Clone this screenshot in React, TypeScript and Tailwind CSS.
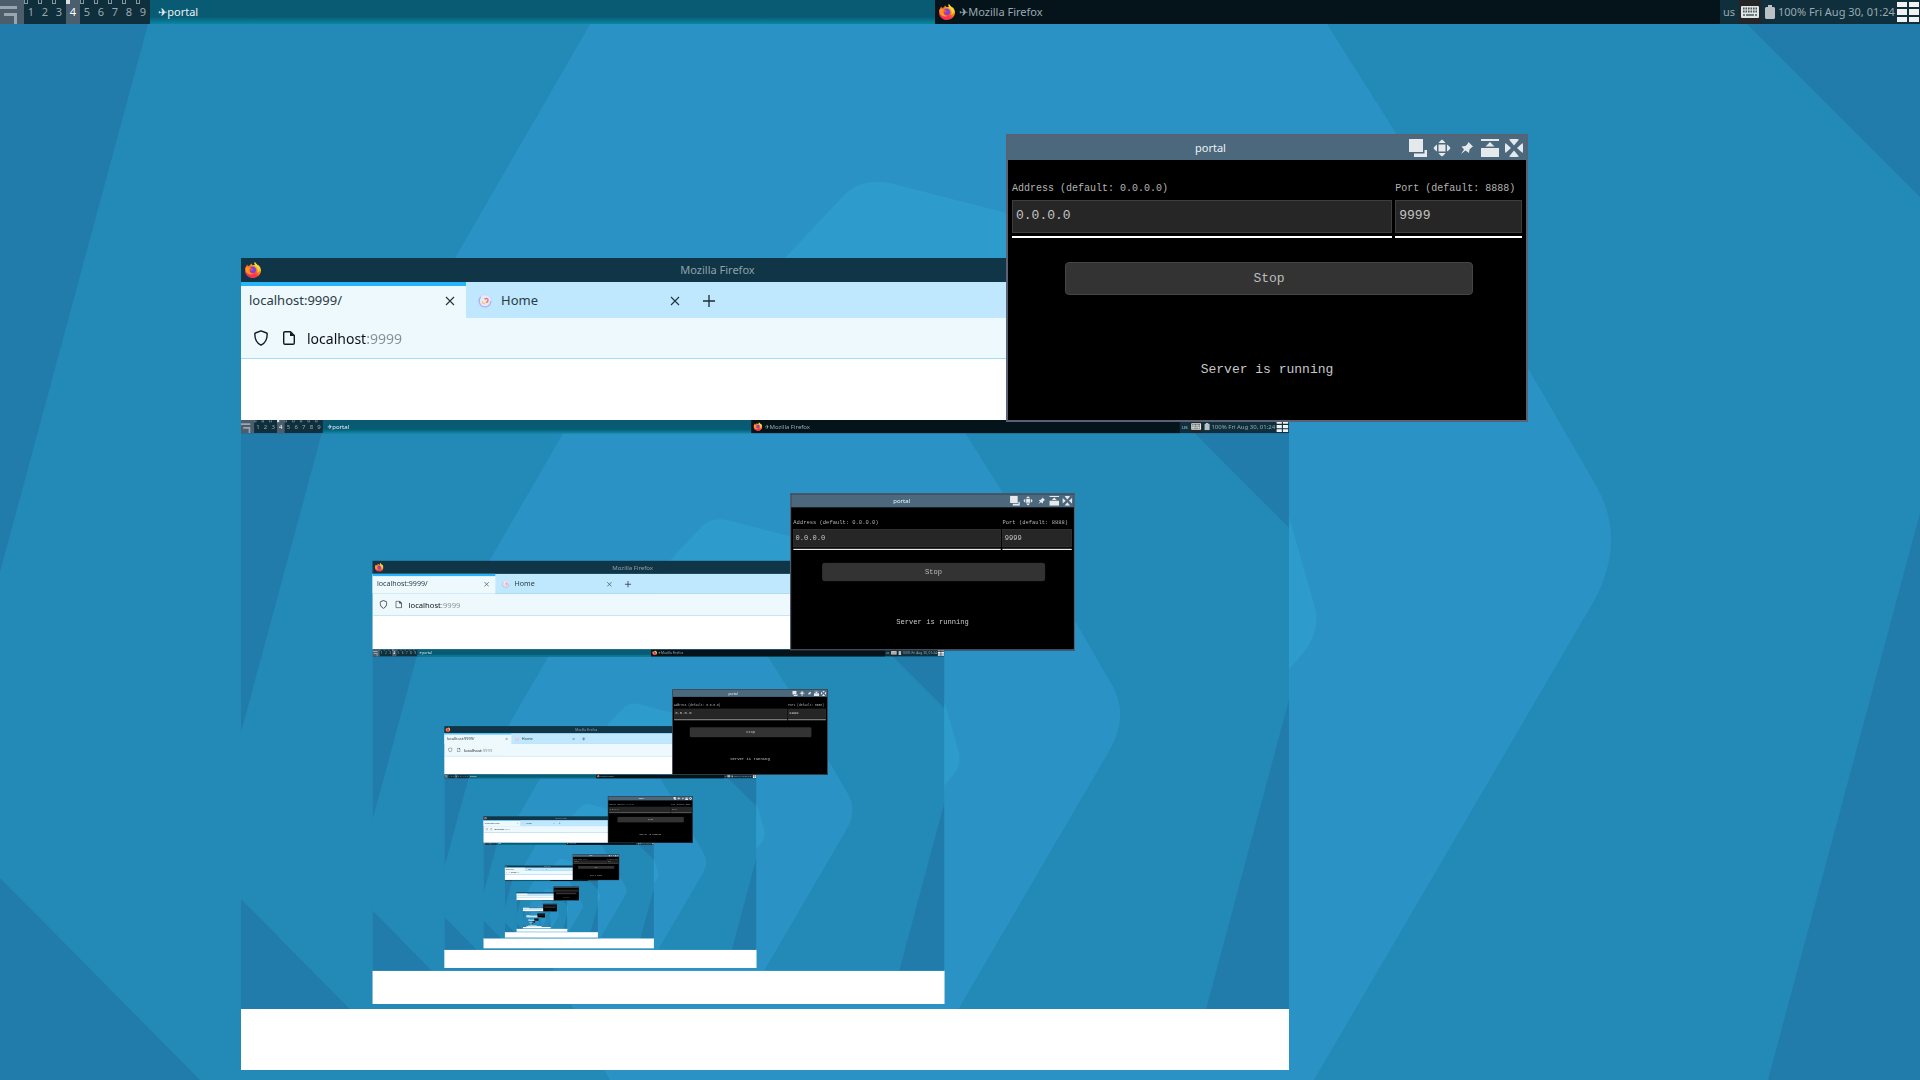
import { useId } from "react";

const DETAILED_DEPTH = 4;
const MAX_DEPTH = 10;
const WORKSPACES = [1, 2, 3, 4, 5, 6, 7, 8, 9];

function Wallpaper() {
  return (
    <svg
      className="absolute inset-0 h-full w-full"
      viewBox="0 0 1920 1080"
      preserveAspectRatio="xMidYMid slice"
      aria-hidden="true"
    >
      <rect width="1920" height="1080" fill="#2389b6" />
      <path d="M0 0H154L148 24L0 572Z" fill="#217cab" />
      <path d="M0 878L200 1080H0Z" fill="#217cab" />
      <path d="M1706 0H1920V197L1747 24Z" fill="#217cab" />
      <path d="M1920 513V1080H1768Z" fill="#217cab" />
      <path
        d="M604 0L440 284V800L610 1080H1314L1590 608Q1630 541 1594 482L1528 368L1394 130L1327 24L1304 0Z"
        fill="#2a92c4"
      />
      <path
        d="M785 258L845 194Q862 178 890 183L1007 213L1220 300L1290 520L1314 604Q1322 630 1304 652L1280 680L640 640Z"
        fill="#2d9bcb"
      />
    </svg>
  );
}

function FirefoxLogo() {
  const id = useId();
  return (
    <svg className="size-4 shrink-0" viewBox="0 0 16 16" aria-hidden="true">
      <defs>
        <linearGradient id={`${id}a`} x1="0.85" y1="0.1" x2="0.2" y2="0.9">
          <stop offset="0" stopColor="#fff44f" />
          <stop offset="0.35" stopColor="#ff980e" />
          <stop offset="0.65" stopColor="#ff3647" />
          <stop offset="1" stopColor="#f0305f" />
        </linearGradient>
      </defs>
      <path
        d="M2.2 2.6C2.4 3.4 2.8 3.9 3.4 4.1C4.2 3.4 4.8 3.3 5.4 3.4C5.3 2.5 5.7 1.8 6.2 1.5C6.4 2.3 7 2.9 8 3.2C8.6 3 9.4 2.9 10 3.1C9.2 2.2 9.3 1 9.9 0C10.6 1.6 12.4 2.4 13 4C13.3 3.7 13.3 3.3 13.2 2.9C14.9 4.2 16 6.2 16 8.3C16 12.7 12.4 16 8 16S0 12.7 0 8.4C0 6 1 4 2.2 2.6Z"
        fill={`url(#${id}a)`}
      />
      <path d="M0.300 6.500C1 4 3.500 4.500 5 6.200C4.200 7 4.300 8 4.500 8.800C5 11 7 12 9 11.600C7 13.500 3 12.500 1 10Z" fill="#ff9a1f" />
      <path
        d="M5.400 5.800C6.200 4.600 8 4.300 9.400 4.900C11.200 5.700 11.700 7.800 10.900 9.400C10 11 8 11.300 6.600 10.600C5.600 10.100 5 9.300 5 8.400C5.600 8.900 6.200 8.700 6.700 8.300L7.900 7.600C7.500 6.800 6.300 6.700 5.400 5.800Z"
        fill="#7b45e0"
      />
      <path
        d="M9.900 0C9 2.300 10.800 3.600 12 5.200C13.300 7 13.100 9.400 12 10.900C14.200 10 15 7.500 14.300 5.400C13.400 3 10.900 2.200 9.900 0Z"
        fill="#ffd83a"
      />
    </svg>
  );
}

function MenuIcon() {
  return (
    <svg className="size-6" viewBox="0 0 24 24" aria-hidden="true">
      <path d="M0 6h17v3H0zM4 13h13v3H4zM14 13h3v11h-3z" fill="#9aa6af" />
    </svg>
  );
}

function KeyboardIcon() {
  return (
    <svg className="h-6 w-[22px]" viewBox="0 0 22 24" aria-hidden="true">
      <rect width="22" height="24" fill="#252525" />
      <rect x="2" y="6" width="18" height="12" rx="1" fill="#dfe6e8" />
      <path d="M4 8.500h14M4 11.500h14" stroke="#4c5557" strokeWidth="2" strokeDasharray="1.600 0.900" />
      <path d="M4 15h2M7 15h8M16 15h2" stroke="#4c5557" strokeWidth="1.600" />
    </svg>
  );
}

function BatteryIcon() {
  return (
    <svg className="h-[14px] w-[10px]" viewBox="0 0 10 14" aria-hidden="true">
      <path d="M3 0h4v2h2l1 1v10l-1 1H1l-1-1V3l1-1h2z" fill="#b9bfc2" />
    </svg>
  );
}

function TilesIcon() {
  return (
    <svg className="h-6 w-[22px]" viewBox="0 0 22 24" aria-hidden="true">
      <path
        d="M0 2h10v5H0zM12 2h10v5H12zM0 9h10v6H0zM12 9h10v6H12zM0 17h10v5H0zM12 17h10v5H12z"
        fill="#f0f2f3"
      />
    </svg>
  );
}

function CloseGlyph() {
  return (
    <svg className="size-[10px]" viewBox="0 0 10 10" aria-hidden="true">
      <path d="M1 1l8 8M9 1l-8 8" stroke="#23343c" strokeWidth="1.100" />
    </svg>
  );
}

function Taskbar() {
  return (
    <header className="relative flex h-6 w-full shrink-0 bg-[#0f2f3d] text-[11px] leading-6 text-[#9aa9b0]">
      <button type="button" aria-label="Menu" className="w-6 shrink-0 bg-[#4c5d6c]">
        <MenuIcon />
      </button>
      <nav aria-label="Workspaces" className="flex w-[126px] shrink-0">
        {WORKSPACES.map((n) => (
          <button
            key={n}
            type="button"
            className={
              n === 4
                ? "relative h-6 w-[14px] bg-[#4b5e6d] text-white"
                : "relative h-6 w-[14px]"
            }
          >
            <span
              className={
                n === 4
                  ? "absolute left-0 top-0 h-1 w-1 bg-[#dbe0e3]"
                  : "absolute left-0 top-0 h-1 w-1 border border-t-0 border-[#86989f]"
              }
            />
            {n}
          </button>
        ))}
      </nav>
      <div className="grid min-w-0 flex-1 grid-cols-2">
        <button
          type="button"
          className="bg-linear-to-b from-[#095a73] from-70% to-[#0789a4] pl-2 text-left text-[#eaf2f4]"
        >
          ✈portal
        </button>
        <button type="button" className="flex items-center gap-1 bg-[#05131b] pl-1 text-left">
          <FirefoxLogo />
          <span>✈Mozilla Firefox</span>
        </button>
      </div>
      <div className="flex w-[200px] shrink-0 items-center">
        <span className="w-[19px] pl-[3px]">us</span>
        <KeyboardIcon />
        <span className="flex w-[17px] justify-center">
          <BatteryIcon />
        </span>
        <span className="flex-1 whitespace-nowrap">100% Fri Aug 30, 01:24</span>
        <button type="button" aria-label="Tile windows" className="w-[23px]">
          <TilesIcon />
        </button>
      </div>
    </header>
  );
}

function BrowserTabs() {
  return (
    <div className="flex h-9 shrink-0 bg-[#bfe8fe] text-[13px] text-[#2b3c44]">
      <div className="flex w-[225px] items-center justify-between border-t-4 border-[#27b4f9] bg-[#eef9fe] pb-[2px] pl-2 pr-[11px]">
        <button type="button">localhost:9999/</button>
        <button type="button" aria-label="Close tab">
          <CloseGlyph />
        </button>
      </div>
      <div className="flex w-[225px] items-center pl-[11px] pr-[11px] pt-[2px]">
        <svg className="mr-2 size-4" viewBox="0 0 16 16" aria-hidden="true">
          <circle cx="8" cy="8" r="7.500" fill="#c6dffb" />
          <circle cx="8" cy="8" r="5.800" fill="#e9e9f8" stroke="#aeb0f2" strokeWidth="1.300" strokeDasharray="22 14" />
          <path d="M7.500 6q3.500-1.400 3.500 1t-2 2.200" fill="none" stroke="#f2726a" strokeWidth="1.400" />
          <path d="M5 8.500q1 2.500 3.500 2" fill="none" stroke="#f5c95c" strokeWidth="1.400" />
        </svg>
        <button type="button" className="flex-1 text-left">
          Home
        </button>
        <button type="button" aria-label="Close tab">
          <CloseGlyph />
        </button>
      </div>
      <button type="button" aria-label="New tab" className="px-3 pt-[2px]">
        <svg className="size-3" viewBox="0 0 12 12" aria-hidden="true">
          <path d="M6 0v12M0 6h12" stroke="#1c2b33" strokeWidth="1.300" />
        </svg>
      </button>
    </div>
  );
}

function AddressBar() {
  return (
    <div className="flex h-[41px] shrink-0 items-center border-b border-[#a5dfec] bg-[#eef9fe] pl-[13px] text-[14px]">
      <svg className="mr-[15px] h-4 w-[14px]" viewBox="0 0 14 16" fill="none" aria-hidden="true">
        <path
          d="M7 0.800L12.600 3Q13.200 3.200 13.200 4C13.200 9 11.500 13 7 15.200C2.500 13 0.800 9 0.800 4Q0.800 3.200 1.400 3Z"
          stroke="#15191c"
          strokeWidth="1.400"
          strokeLinejoin="round"
        />
      </svg>
      <svg className="mr-3 h-[14px] w-3" viewBox="0 0 12 14" fill="none" aria-hidden="true">
        <path
          d="M7.500 0.700H2Q0.700 0.700 0.700 2V12Q0.700 13.300 2 13.300H10Q11.300 13.300 11.300 12V4.500Z"
          stroke="#15191c"
          strokeWidth="1.400"
          strokeLinejoin="round"
        />
        <path d="M7 0.700V5H11.300Z" fill="#15191c" />
      </svg>
      <input
        type="text"
        aria-label="Address"
        defaultValue="localhost:9999"
        className="h-8 flex-1 bg-linear-to-r from-[#0d1114] from-[59px] to-[#828f95] to-[59px] bg-clip-text text-transparent outline-none"
      />
    </div>
  );
}

/* The streamed page: the captured desktop centred between two white margins. */
function Stream({ depth }: { depth: number }) {
  return (
    <div className="flex min-h-0 flex-1 flex-col">
      <div className="flex-1 bg-white" />
      <div className="h-[589px] w-full shrink-0 overflow-hidden">
        {depth < MAX_DEPTH && (
          <div inert className="h-[1080px] w-[1920px] origin-top-left scale-[0.5458]">
            {depth < DETAILED_DEPTH ? (
              <Desktop depth={depth + 1} />
            ) : (
              <DesktopThumbnail depth={depth + 1} />
            )}
          </div>
        )}
      </div>
      <div className="flex-1 bg-white" />
    </div>
  );
}

function BrowserWindow({ depth }: { depth: number }) {
  return (
    <section
      aria-label="Mozilla Firefox"
      className="absolute left-[241px] top-[258px] flex h-[812px] w-[1048px] flex-col"
    >
      <div className="flex h-6 shrink-0 items-center bg-[#103547] pl-1 pr-[115px] text-[11px] text-[#8fa1aa]">
        <FirefoxLogo />
        <h2 className="flex-1 text-center">Mozilla Firefox</h2>
      </div>
      <BrowserTabs />
      <AddressBar />
      <Stream depth={depth} />
    </section>
  );
}

function WindowButtons() {
  return (
    <div className="flex items-center gap-[6px] pr-[3px]">
      <button type="button" aria-label="Stack">
        <svg className="size-[18px]" viewBox="0 0 18 18" fill="#e6e9ec" aria-hidden="true">
          <path d="M0 0h14v13H0zM15.500 11H18v7H5v-3.500h10.500z" />
        </svg>
      </button>
      <button type="button" aria-label="Move">
        <svg className="size-[18px]" viewBox="0 0 18 18" fill="#e6e9ec" aria-hidden="true">
          <path d="M5.500 5.500h7v7h-7zM9 0.500Q11 1.500 12.500 4H5.500Q7 1.500 9 0.500zM9 17.500Q11 16.500 12.500 14H5.500Q7 16.500 9 17.500zM0.500 9Q1.500 7 4 5.500V12.500Q1.500 11 0.500 9zM17.500 9Q16.500 7 14 5.500V12.500Q16.500 11 17.500 9z" />
        </svg>
      </button>
      <button type="button" aria-label="Pin">
        <svg className="size-[18px]" viewBox="0 0 18 18" fill="#e6e9ec" aria-hidden="true">
          <path d="M11.500 3L16 7.500L14.500 8.500L12.500 10.500L12 14L8.500 11.500L4 15L7 10.500L4.500 7.500L8.500 7L10.500 5Z" />
        </svg>
      </button>
      <button type="button" aria-label="Shade">
        <svg className="size-[18px]" viewBox="0 0 18 18" fill="#e6e9ec" aria-hidden="true">
          <path d="M0 0h18v2H0zM9 3L13.500 7.500H4.500zM0 9h18v9H0z" />
        </svg>
      </button>
      <button type="button" aria-label="Close">
        <svg className="size-[18px]" viewBox="0 0 18 18" fill="#e6e9ec" aria-hidden="true">
          <path d="M4 0.500Q9 -1 14 0.500L9 6.500zM4 17.500Q9 19 14 17.500L9 11.500zM0.500 4Q-1 9 0.500 14L6 9zM17.500 4Q19 9 17.500 14L12 9z" />
        </svg>
      </button>
    </div>
  );
}

function Field({ label, value }: { label: string; value: string }) {
  const id = useId();
  return (
    <div className="flex min-w-0 flex-col">
      <label htmlFor={id} className="mb-[3px] whitespace-nowrap text-[10px] leading-4 text-[#b4b4b4]">
        {label}
      </label>
      <input
        id={id}
        type="text"
        defaultValue={value}
        className="h-[33px] w-full border border-[#3d3d3d] bg-[#262626] pb-[2px] pl-[3px] text-[13px] text-[#c4c4c4] outline-none"
      />
      <div className="mt-[3px] h-[2px] bg-white" />
    </div>
  );
}

function PortalWindow() {
  return (
    <section
      aria-label="portal"
      className="absolute left-[1006px] top-[134px] flex h-[288px] w-[522px] flex-col border-2 border-[#5a6172] bg-black"
    >
      <div className="flex h-6 shrink-0 items-center bg-[#4b687d] text-[11px] text-[#eef2f5]">
        <h2 className="flex-1 pl-1 text-center">portal</h2>
        <WindowButtons />
      </div>
      <form className="flex flex-1 flex-col items-center px-1 pt-[21px] font-['Liberation_Mono',monospace]">
        <div className="grid w-full grid-cols-[3fr_1fr] gap-[3px]">
          <Field label="Address (default: 0.0.0.0)" value="0.0.0.0" />
          <Field label="Port (default: 8888)" value="9999" />
        </div>
        <button
          type="button"
          className="ml-1 mt-6 h-[33px] w-4/5 rounded border border-[#454545] bg-[#333333] text-[13px] text-[#bdbdbd]"
        >
          Stop
        </button>
        <p className="mt-[65px] text-[13px] leading-5 text-[#c8c8c8]">Server is running</p>
      </form>
    </section>
  );
}

/* Text-free desktop for the levels of the stream that are too small to read. */
function DesktopThumbnail({ depth }: { depth: number }) {
  return (
    <div className="relative h-full w-full overflow-hidden">
      <Wallpaper />
      <div className="relative flex h-6">
        <div className="w-[150px] bg-[#2a4552]" />
        <div className="flex-1 bg-[#095a73]" />
        <div className="flex-1 bg-[#05131b]" />
        <div className="w-[200px] bg-[#3a525d]" />
      </div>
      <div className="absolute left-[241px] top-[258px] flex h-[812px] w-[1048px] flex-col">
        <div className="h-6 bg-[#103547]" />
        <div className="flex h-9 bg-[#bfe8fe]">
          <div className="w-[225px] bg-[#eef9fe]" />
        </div>
        <div className="h-[41px] bg-[#eef9fe]" />
        <Stream depth={depth} />
      </div>
      <div className="absolute left-[1006px] top-[134px] flex h-[288px] w-[522px] flex-col bg-black">
        <div className="h-[26px] bg-[#4b687d]" />
        <div className="mx-1 mt-10 h-[33px] bg-[#262626]" />
        <div className="mx-1 mt-[3px] h-[2px] bg-white" />
        <div className="mx-auto mt-6 h-[33px] w-4/5 bg-[#333333]" />
        <div className="mx-auto mt-[70px] h-2 w-[136px] bg-[#555555]" />
      </div>
    </div>
  );
}

function Desktop({ depth }: { depth: number }) {
  return (
    <div className="relative flex h-full w-full flex-col overflow-hidden">
      <Wallpaper />
      <Taskbar />
      <main className="contents">
        <BrowserWindow depth={depth} />
        <PortalWindow />
      </main>
    </div>
  );
}

export default function App() {
  return (
    <div className="h-screen w-full font-['Noto_Sans','DejaVu_Sans',sans-serif]">
      <Desktop depth={0} />
    </div>
  );
}
